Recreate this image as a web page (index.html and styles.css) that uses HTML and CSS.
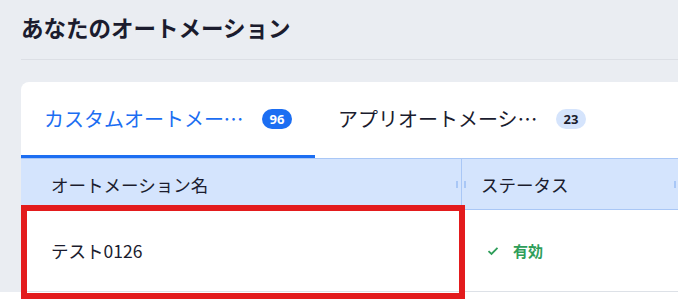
FILE: index.html
```html
<!DOCTYPE html>
<html lang="ja">
<head>
    <meta charset="UTF-8">
    <meta name="viewport" content="width=device-width, initial-scale=1.0">
    <title>あなたのオートメーション</title>
    <link rel="stylesheet" href="styles.css">
</head>
<body>
    <div class="page">
        <h1 class="page-title">あなたのオートメーション</h1>
        <div class="card">
            <div class="tabs">
                <div class="tab active">
                    <span class="tab-label">カスタムオートメーション</span>
                    <span class="badge">96</span>
                </div>
                <div class="tab">
                    <span class="tab-label">アプリオートメーション</span>
                    <span class="badge light">23</span>
                </div>
            </div>
            <div class="table">
                <div class="row head">
                    <div class="cell name">オートメーション名<span class="grip left"></span></div>
                    <div class="cell status">ステータス<span class="grip right"></span></div>
                </div>
                <div class="row">
                    <div class="cell name">テスト0126</div>
                    <div class="cell status">
                        <span class="state">
                            <svg width="12" height="10" viewBox="0 0 12 10"><path d="M1.5 5.2 L4.5 8 L10.5 1.8" fill="none" stroke="#2f9e5a" stroke-width="1.8"/></svg>
                            有効
                        </span>
                    </div>
                </div>
            </div>
        </div>
    </div>
    <div class="bottom"></div>
    <div class="highlight"></div>
</body>
</html>
```

FILE: styles.css
```css
body {
    margin: 0;
    background-color: #eaedf2;
    font-family: "Noto Sans CJK JP", "Noto Sans", sans-serif;
    color: #1b1c2e;
    overflow: hidden;
}
.page {
    padding-left: 21px;
}
.page-title {
    margin: 0;
    padding: 13px 0 17px;
    font-size: 22.5px;
    line-height: 29px;
    font-weight: bold;
    border-bottom: 1px solid #dcdfe5;
}
.card {
    margin-top: 22px;
    background-color: #fff;
    border-top-left-radius: 8px;
}
.tabs {
    display: flex;
    height: 76px;
}
.tab {
    display: flex;
    align-items: center;
    gap: 18px;
    padding: 0 23px 0 23px;
    font-size: 20px;
    color: #1b1c2e;
    border-bottom: 3px solid transparent;
    box-sizing: border-box;
}
.tab.active {
    color: #1c6ef2;
    border-bottom-color: #1c6ef2;
}
.tab-label {
    width: 200px;
    white-space: nowrap;
    overflow: hidden;
    text-overflow: ellipsis;
}
.badge {
    display: inline-flex;
    align-items: center;
    justify-content: center;
    width: 30px;
    height: 20px;
    border-radius: 10px;
    background-color: #1c6ef2;
    color: #fff;
    font-family: "Noto Sans", sans-serif;
    font-size: 13px;
    font-weight: bold;
}
.badge.light {
    background-color: #d5e4fc;
    color: #1b1c2e;
}
.row {
    display: flex;
    border-bottom: 1px solid #dde1e7;
}
.row.head {
    height: 50px;
    background-color: #d4e4fd;
    border-top: 1px solid #a9c7f6;
    border-bottom: 1px solid #a9c7f6;
}
.cell {
    position: relative;
    display: flex;
    align-items: center;
    font-size: 17.5px;
    box-sizing: border-box;
}
.cell.name {
    width: 441px;
    padding-left: 30px;
}
.row.head .cell.name {
    border-right: 1px solid #a9c7f6;
}
.cell.status {
    flex: 1;
    padding-left: 19px;
}
.row:not(.head) .cell {
    height: 81px;
}
.row:not(.head) .cell.status {
    padding-left: 25px;
}
.grip {
    position: absolute;
    top: 22px;
    width: 2px;
    height: 7px;
    background-color: #a9c7f6;
}
.grip.left {
    right: 3px;
}
.grip.right {
    left: 2px;
}
.row.head .cell.status::after {
    content: "";
    position: absolute;
    top: 22px;
    left: 212px;
    width: 2px;
    height: 7px;
    background-color: #a9c7f6;
}
.state {
    display: flex;
    align-items: center;
    gap: 14px;
    font-size: 15px;
    font-weight: bold;
    color: #2f9e5a;
}
.bottom {
    height: 20px;
    background-color: #fff;
}
.highlight {
    position: absolute;
    left: 21px;
    top: 205px;
    width: 432px;
    height: 82px;
    border: 6px solid #e31b1d;
}
```
